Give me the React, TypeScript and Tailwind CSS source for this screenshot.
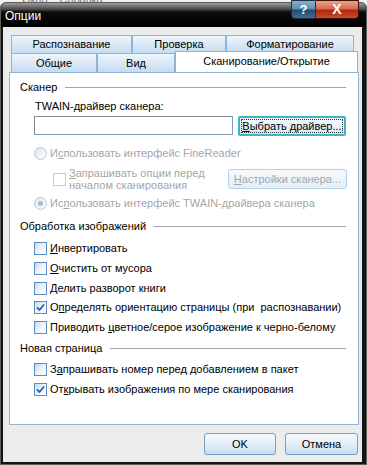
import React from 'react';

const FONT = { fontFamily: '"Liberation Sans", Arial, sans-serif' };

const Check = () => (
  <svg width="9" height="9" viewBox="0 0 9 9" className="absolute left-[1px] top-[1px]">
    <path d="M1 4.5 L3.5 7 L8 1.5" fill="none" stroke="#1f5fc0" strokeWidth="1.8" />
  </svg>
);

const CheckBox = ({ checked = false, disabled = false }: { checked?: boolean; disabled?: boolean }) => (
  <span
    className={
      'relative inline-block w-[13px] h-[13px] shrink-0 border ' +
      (disabled
        ? 'border-[#b9cde4] bg-white'
        : 'border-[#5b8bc4] bg-gradient-to-br from-[#c9d7ea] via-[#eef3fa] to-white')
    }
  >
    {checked && <Check />}
  </span>
);

const Radio = ({ checked = false }: { checked?: boolean }) => (
  <span className="relative inline-flex items-center justify-center w-[13px] h-[13px] shrink-0 rounded-full border border-[#b3c8e0] bg-gradient-to-br from-[#dbe6f2] to-white">
    {checked && <span className="w-[5px] h-[5px] rounded-full bg-[#a9bbd0]" />}
  </span>
);

const GroupHeader = ({ title, mt }: { title: string; mt: string }) => (
  <div className={'flex items-center h-[14px] pl-[10px] pr-[12px] ' + mt}>
    <span className="whitespace-nowrap">{title}</span>
    <span className="flex-1 h-px bg-[#a5a5a5] ml-[8px]" />
  </div>
);

const Option = ({
  children,
  checked,
  mt,
}: {
  children: React.ReactNode;
  checked?: boolean;
  mt: string;
}) => (
  <div className={'flex items-center h-[14px] pl-[24px] gap-[3px] ' + mt}>
    <CheckBox checked={checked} />
    <span className="whitespace-nowrap">{children}</span>
  </div>
);

const DlgButton = ({ children, w }: { children: React.ReactNode; w: string }) => (
  <div
    className={
      'h-[22px] flex items-center justify-center rounded-[3px] border border-[#7b9ec4] bg-gradient-to-b from-[#f6f9fd] via-[#e4eef8] to-[#c8dcf0] ' +
      w
    }
  >
    {children}
  </div>
);

export default function App() {
  return (
    <div className="relative w-[367px] h-[465px] overflow-hidden bg-[#f2f2f2] text-[11px] text-black" style={FONT}>
      {/* window behind the dialog */}
      <div className="absolute left-[22px] top-[-9px] flex gap-[12px] text-[#777]">
        <span>Окно</span>
        <span>Справка</span>
      </div>

      <div className="relative mt-[2px] h-[463px] flex flex-col rounded-t-[6px] border border-[#5e5e5e] bg-[#141414]">
        {/* title bar */}
        <div className="h-[24px] flex items-center pl-[4px] pt-[2px] rounded-t-[5px] text-white text-[12px] bg-[linear-gradient(to_bottom,#9c9c9c_0px,#4e4e4e_6px,#0c0c0c_9px,#000_24px)]">
          Опции
        </div>

        {/* body */}
        <div className="flex-1 ml-[2px] mr-[4px] mb-[2px] bg-[#ececec] flex flex-col">
          {/* tabs */}
          <div className="pl-[8px] pt-[8px] flex flex-col">
            <div className="flex h-[18px]">
              <div className="w-[121px] flex items-center justify-center border border-b-0 border-[#8fb4d8] bg-gradient-to-b from-[#eef5fc] to-[#c6dcf0]">
                Распознавание
              </div>
              <div className="w-[94px] flex items-center justify-center border border-b-0 border-[#8fb4d8] bg-gradient-to-b from-[#eef5fc] to-[#c6dcf0]">
                Проверка
              </div>
              <div className="w-[128px] flex items-center justify-center border border-b-0 border-[#8fb4d8] bg-gradient-to-b from-[#eef5fc] to-[#c6dcf0]">
                Форматирование
              </div>
            </div>
            <div className="flex h-[19px]">
              <div className="w-[86px] flex items-center justify-center border border-b-0 border-[#8fb4d8] bg-gradient-to-b from-[#eef5fc] to-[#c6dcf0]">
                Общие
              </div>
              <div className="w-[78px] flex items-center justify-center border border-b-0 border-[#8fb4d8] bg-gradient-to-b from-[#eef5fc] to-[#c6dcf0]">
                Вид
              </div>
              <div className="relative z-10 w-[183px] h-[21px] -mt-[2px] flex items-center justify-center pb-[2px] border border-b-0 border-[#8fb4d8] bg-white">
                Сканирование/Открытие
              </div>
            </div>
          </div>

          {/* tab panel */}
          <div className="ml-[6px] w-[350px] h-[353px] border border-[#8fb4d8] bg-white flex flex-col">
            <GroupHeader title="Сканер" mt="mt-[7px]" />

            <div className="h-[14px] mt-[5px] pl-[25px] flex items-center">TWAIN-драйвер сканера:</div>

            <div className="mt-[3px] h-[19px] pl-[24px] flex gap-[5px]">
              <div className="w-[199px] h-[19px] border border-[#7f9db9] border-t-[#8a8a8a] border-l-[#8a8a8a] bg-white" />
              <div className="w-[108px] h-[20px] rounded-[2px] border-2 border-[#3cb4c4] bg-gradient-to-b from-[#f4f9fd] to-[#d8e8f6] p-[1px]">
                <div className="h-full flex items-center justify-center border border-dotted border-[#333] whitespace-nowrap">
                  <span>
                    <span className="underline">В</span>ыбрать драйвер...
                  </span>
                </div>
              </div>
            </div>

            <div className="mt-[11px] h-[14px] pl-[24px] flex items-center gap-[3px] text-[#a6a6a6]">
              <Radio />
              <span className="whitespace-nowrap">
                И<span className="underline">с</span>пользовать интерфейс FineReader
              </span>
            </div>

            <div className="mt-[8px] h-[22px] pl-[43px] pr-[11px] flex items-center text-[#a6a6a6]">
              <CheckBox disabled />
              <span className="ml-[3px] leading-[12px] w-[150px] flex flex-col">
                <span className="whitespace-nowrap">
                  <span className="underline">З</span>апрашивать опции перед
                </span>
                <span className="whitespace-nowrap">началом сканирования</span>
              </span>
              <div className="ml-auto w-[119px] h-[20px] flex items-center justify-center rounded-[3px] border border-[#b6d0e8] bg-gradient-to-b from-[#f6fafd] to-[#e2eef8] whitespace-nowrap">
                <span>
                  <span className="underline">Н</span>астройки сканера...
                </span>
              </div>
            </div>

            <div className="mt-[6px] h-[14px] pl-[24px] flex items-center gap-[3px] text-[#a6a6a6]">
              <Radio checked />
              <span className="whitespace-nowrap">
                Ис<span className="underline">п</span>ользовать интерфейс TWAIN-драйвера сканера
              </span>
            </div>

            <GroupHeader title="Обработка изображений" mt="mt-[9px]" />
            <Option mt="mt-[8px]">
              <span className="underline">И</span>нвертировать
            </Option>
            <Option mt="mt-[6px]">
              <span className="underline">О</span>чистить от мусора
            </Option>
            <Option mt="mt-[6px]">
              <span className="underline">Д</span>елить разворот книги
            </Option>
            <Option mt="mt-[5px]" checked>
              О<span className="underline">п</span>ределять ориентацию страницы (при&nbsp; распознавании)
            </Option>
            <Option mt="mt-[6px]">
              Приводить <span className="underline">ц</span>ветное/серое изображение к черно-белому
            </Option>

            <GroupHeader title="Новая страница" mt="mt-[7px]" />
            <Option mt="mt-[7px]">
              З<span className="underline">а</span>прашивать номер перед добавлением в пакет
            </Option>
            <Option mt="mt-[6px]" checked>
              От<span className="underline">к</span>рывать изображения по мере сканирования
            </Option>
          </div>

          {/* dialog buttons */}
          <div className="mt-[8px] pr-[4px] flex justify-end gap-[9px]">
            <DlgButton w="w-[72px]">OK</DlgButton>
            <DlgButton w="w-[73px]">Отмена</DlgButton>
          </div>
        </div>
      </div>

      {/* caption buttons */}
      <div className="absolute top-0 left-[291px] flex">
        <div className="w-[25px] h-[19px] flex items-center justify-center rounded-bl-[4px] border border-[#1d2f40] text-white font-bold text-[13px] bg-[linear-gradient(to_bottom,#86b0cf_0%,#5f8fb3_45%,#244c6c_55%,#3e6f92_100%)]">
          ?
        </div>
        <div className="w-[43px] h-[19px] flex items-center justify-center rounded-br-[4px] border border-l-0 border-[#3a1208] text-white font-bold text-[14px] bg-[linear-gradient(to_bottom,#e8a48c_0%,#d66a4c_45%,#b3280e_55%,#c8482a_100%)]">
          X
        </div>
      </div>
    </div>
  );
}
